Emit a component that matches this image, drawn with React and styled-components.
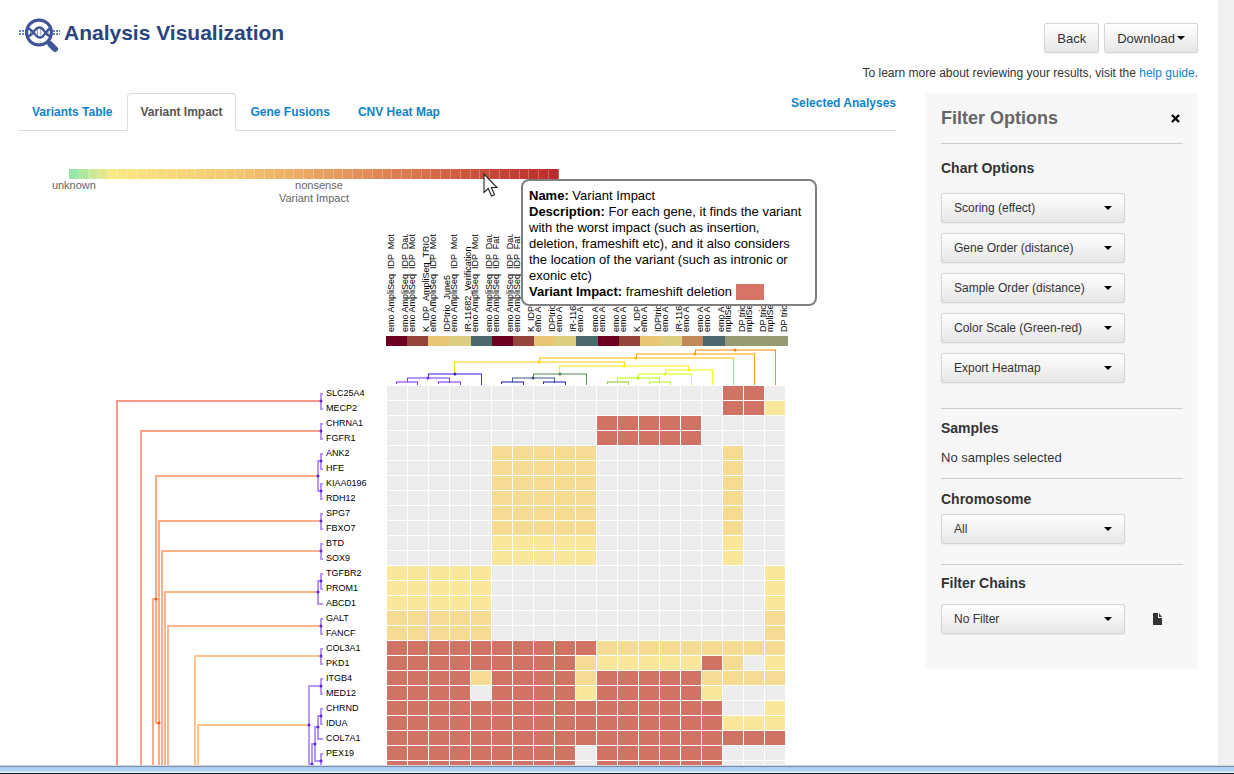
import React, { useState } from "react";
import styled, { createGlobalStyle } from "styled-components";

const GENES = [
  ["SLC25A4", "................rr."],
  ["MECP2", "................rry"],
  ["CHRNA1", "..........rrrrr...."],
  ["FGFR1", "..........rrrrr...."],
  ["ANK2", ".....ooooo......o.."],
  ["HFE", ".....ooooo......o.."],
  ["KIAA0196", ".....ooooo......o.."],
  ["RDH12", ".....ooooo......o.."],
  ["SPG7", ".....ooooo......o.."],
  ["FBXO7", ".....ooooo......o.."],
  ["BTD", ".....yyyyy......y.."],
  ["SOX9", ".....yyyyy......y.."],
  ["TGFBR2", "yyyyy.............y"],
  ["PROM1", "yyyyy.............y"],
  ["ABCD1", "yyyyy.............y"],
  ["GALT", "ooooo.............o"],
  ["FANCF", "ooooo.............o"],
  ["COL3A1", "rrrrrrrrrrooooooooo"],
  ["PKD1", "rrrrrrrrroyyyyyro.y"],
  ["ITGB4", "rrrrorrrrorrrrroooo"],
  ["MED12", "rrrr.rrrryrrrrry..."],
  ["CHRND", "rrrrrrrrrrrrrrrr..y"],
  ["IDUA", "rrrrrrrrrrrrrrrryyy"],
  ["COL7A1", "rrrrrrrrrrrrrrrrrrr"],
  ["PEX19", "rrrrrrrrr.rrrrrr..."],
  ["", "rrrrrrrrr.rrrrrr..."],
];

const CELL_COLORS = { r: "#d07264", o: "#f5db94", y: "#fae79b", ".": "#ededed" };

const BAND = [
  "#6b0020", "#95443c", "#e8c878", "#dccf80", "#4e676c",
  "#6b0020", "#95443c", "#e8c878", "#dccf80", "#4e676c",
  "#6b0020", "#95443c", "#e8c878", "#dccf80", "#c18858",
  "#4e676c", "#969a73", "#969a73", "#969a73",
];

const MOT = "emo AmpliSeq  IDP  Mot";
const DAU = "emo AmpliSeq  IDP  Dau";
const FAT = "emo AmpliSeq  IDP  Fat";
const TRIO = "K_IDP_AmpliSeq_TRIO";
const JUNE = "IDPtrio_June5";
const IR = "IR-11682_Verification";

// [baseline x, label]
const SAMPLES = [
  [8, MOT], [22, DAU], [29, MOT], [43, TRIO], [50, MOT], [64, JUNE], [71, MOT],
  [85, IR], [92, MOT], [106, DAU], [113, FAT], [127, DAU], [134, FAT],
  [148, TRIO], [155, FAT], [169, JUNE], [176, FAT], [190, IR], [197, FAT],
  [212, DAU], [219, FAT], [233, DAU], [240, MOT], [254, TRIO], [261, MOT],
  [275, JUNE], [282, MOT], [296, IR], [303, MOT], [317, DAU], [324, MOT],
  [338, DAU], [345, "mpliSeq IDP"], [359, "DP trio"], [366, "mpliSeq IDP"],
  [380, "DP trio"], [387, "mpliSeq IDP"], [401, "DP trio"],
];

// [y, x1, bottom of left arm, x2, bottom of right arm, colour]
const COLUMN_TREE = [
  [4, 309, 8, 389, 38, "#ff7f00"],
  [8, 250, 12, 368, 38, "#ff9f00"],
  [12, 153, 16, 347, 38, "#ffbc00"],
  [16, 68, 28, 238, 20, "#ffd000"],
  [20, 173, 28, 302, 24, "#ffee00"],
  [24, 279, 28, 326, 38, "#f0ff00"],
  [28, 252, 32, 305, 38, "#d8ff00"],
  [32, 231, 36, 273, 36, "#b4ff00"],
  [36, 221, 38, 242, 38, "#84cc20"],
  [36, 263, 38, 284, 38, "#b0f400"],
  [28, 42, 32, 95, 38, "#4018d8"],
  [32, 21, 36, 63, 36, "#7030f0"],
  [36, 10, 38, 31, 38, "#8020ff"],
  [36, 52, 38, 74, 38, "#8020ff"],
  [28, 147, 32, 200, 38, "#4f8a50"],
  [32, 126, 36, 168, 36, "#365a86"],
  [36, 115, 38, 137, 38, "#1414b8"],
  [36, 157, 38, 179, 38, "#1414b8"],
];

// [x, y1, end of upper arm, y2, end of lower arm, colour]
const V = "#6a30ee";
const ROW_TREE = [
  [302, 8, 304, 23, 304, V],
  [302, 38, 304, 53, 304, V],
  [302, 68, 304, 83, 304, V],
  [302, 98, 304, 113, 304, V],
  [299, 75, 302, 105, 302, V],
  [302, 128, 304, 143, 304, V],
  [302, 158, 304, 173, 304, V],
  [302, 188, 304, 203, 304, V],
  [299, 195, 302, 218, 304, V],
  [302, 233, 304, 248, 304, V],
  [302, 263, 304, 278, 304, V],
  [302, 293, 304, 308, 304, V],
  [302, 323, 304, 338, 304, V],
  [299, 330, 302, 353, 304, V],
  [302, 368, 304, 383, 304, V],
  [296, 341, 299, 375, 302, V],
  [293, 358, 296, 390, 296, V],
  [290, 300, 302, 378, 293, V],
  [98, 15, 302, 420, 98, "#ff2d08"],
  [122, 45, 302, 420, 122, "#ff4412"],
  [137, 90, 299, 337, 140, "#ff5510"],
  [134, 213, 137, 420, 134, "#ff5510"],
  [140, 135, 302, 420, 140, "#ff5a14"],
  [143, 165, 302, 420, 143, "#ff6014"],
  [146, 206, 299, 420, 146, "#ff6414"],
  [149, 240, 302, 420, 149, "#ff6a18"],
  [176, 270, 302, 420, 176, "#ff8a18"],
  [179, 339, 290, 420, 179, "#ff9020"],
];

const ROW_NODES = [
  [302, 15], [302, 45], [302, 75], [302, 105], [299, 90], [302, 135], [302, 165],
  [302, 195], [299, 206], [302, 240], [302, 270], [302, 300], [302, 330],
  [299, 341], [296, 358], [293, 378], [290, 339], [302, 375],
];

const STOPS = [
  [0, [152, 230, 168]],
  [4, [251, 233, 131]],
  [16, [243, 201, 114]],
  [27, [229, 155, 95]],
  [36, [214, 112, 75]],
  [42, [200, 76, 58]],
  [49, [186, 43, 43]],
];

const scaleColor = (i) => {
  const next = STOPS.findIndex(([at]) => at > i);
  if (next === -1) return `rgb(${STOPS[STOPS.length - 1][1].join(",")})`;
  const [a, from] = STOPS[next - 1];
  const [b, to] = STOPS[next];
  const t = (i - a) / (b - a);
  return `rgb(${from.map((c, k) => Math.round(c + (to[k] - c) * t)).join(",")})`;
};

const Logo = () => (
  <svg width="42" height="36" viewBox="0 0 42 36" fill="none" stroke="#3f5598" aria-hidden="true">
    <path d="M0 14h7M0 17h7M34 14h7M34 17h7" strokeDasharray="2 1" strokeWidth="1.5" />
    <circle cx="20" cy="15.500" r="12.400" strokeWidth="3.200" />
    <path d="M29 24.500l2.500 2.500" strokeWidth="4" />
    <path d="M31.500 27.500L36 32" strokeWidth="6" strokeLinecap="round" />
    <path d="M8 11.500c3.500 0 5 2 7 4.500s3 4.500 6 4.500 4-2.500 5.500-4.500 2.500-4.500 6-4.500" strokeWidth="2.300" />
    <path d="M8 19.500c3.500 0 5-2.500 6.500-4.500s3-4.500 6-4.500 4 2.500 5.500 4.500 3 4.500 6.500 4.500" strokeWidth="2.300" />
    <path d="M11.500 13v5M18.500 12v6.500M21.800 12v6.500M29 13.500v4" strokeWidth="1" opacity="0.6" />
  </svg>
);

const Caret = () => (
  <StCaret width="8" height="4" viewBox="0 0 8 4" aria-hidden="true">
    <path d="M0 0h8L4 4z" />
  </StCaret>
);

const Select = ({ label, options }) => {
  const [value, setValue] = useState(options[0]);
  return (
    <StSelectBox>
      <StSelect aria-label={label} value={value} onChange={(e) => setValue(e.target.value)}>
        {options.map((o) => (
          <option key={o}>{o}</option>
        ))}
      </StSelect>
      <Caret />
    </StSelectBox>
  );
};

const Legend = () => (
  <StLegend>
    <StScale>
      {Array.from({ length: 50 }, (_, i) => (
        <StScaleStep key={i} style={{ backgroundColor: scaleColor(i) }} />
      ))}
    </StScale>
    <StScaleLabels>
      <StScaleLabel $at={1}>unknown</StScaleLabel>
      <StScaleLabel $at={26}>nonsense</StScaleLabel>
    </StScaleLabels>
    <StScaleTitle>Variant Impact</StScaleTitle>
    <StPointer width="15" height="25" viewBox="0 0 15 25" aria-hidden="true">
      <path
        d="M1 1v18.500l4.300-4 3.200 7.500 3-1.300-3.200-7.200h5.700z"
        fill="#fff"
        stroke="#222"
        strokeWidth="1.100"
      />
    </StPointer>
    <StTooltip role="tooltip">
      <div><b>Name:</b> Variant Impact</div>
      <div>
        <b>Description:</b> For each gene, it finds the variant with the worst impact (such as
        insertion, deletion, frameshift etc), and it also considers the location of the variant
        (such as intronic or exonic etc)
      </div>
      <StTooltipValue>
        <span><b>Variant Impact:</b> frameshift deletion</span>
        <StSwatch />
      </StTooltipValue>
    </StTooltip>
  </StLegend>
);

const Heatmap = () => (
  <StChart>
    <StSampleLabels width="404" height="102">
      {SAMPLES.map(([x, name]) => (
        <text key={x} transform={`translate(${x} 98) rotate(-90)`}>
          {name}
        </text>
      ))}
    </StSampleLabels>
    <StBand>
      {BAND.map((c, i) => (
        <StBandStep key={i} $color={c} />
      ))}
    </StBand>
    <StColumnTree width="402" height="40">
      {COLUMN_TREE.map(([y, x1, b1, x2, b2, c], i) => (
        <g key={i} stroke={c} fill="none">
          <path d={`M${x1} ${y}H${x2 + 1}`} strokeWidth="2" opacity="0.5" />
          <path d={`M${x1 + 0.5} ${y}V${b1}M${x2 + 0.5} ${y}V${b2 + 1}`} opacity="0.9" />
          {b2 - y > 2 && (
            <circle cx={Math.round((x1 + x2) / 2)} cy={y} r="1.500" fill={c} stroke="none" />
          )}
        </g>
      ))}
    </StColumnTree>
    <StRowTree width="307" height="400">
      {ROW_TREE.map(([x, y1, a1, y2, a2, c], i) => (
        <path key={i} d={`M${a1} ${y1}H${x}V${y2}H${a2}`} stroke={c} fill="none" strokeWidth="2" opacity="0.5" />
      ))}
      {ROW_NODES.map(([x, y]) => (
        <circle key={`${x}-${y}`} cx={x} cy={y} r="1.500" fill="#5a28d8" />
      ))}
      <circle cx="137" cy="213" r="1.500" fill="#ff5510" />
      <circle cx="140" cy="337" r="1.500" fill="#ff5510" />
    </StRowTree>
    <StGeneNames>
      {GENES.map(([name], i) => (
        <StGeneName key={i}>{name}</StGeneName>
      ))}
    </StGeneNames>
    <StCells>
      {GENES.map(([, row], i) =>
        row.split("").map((v, k) => <StCell key={`${i}-${k}`} $color={CELL_COLORS[v]} />)
      )}
    </StCells>
  </StChart>
);

const FilterPanel = () => (
  <StPanel>
    <StPanelHeader>
      <StPanelTitle>Filter Options</StPanelTitle>
      <StClose aria-label="Close">
        <svg width="9" height="9" viewBox="0 0 9 9" stroke="#000" strokeWidth="2.300">
          <path d="M1 1l7 7M8 1l-7 7" />
        </svg>
      </StClose>
    </StPanelHeader>
    <StSection $height={265}>
      <StSectionTitle $top={14} $bottom={15}>Chart Options</StSectionTitle>
      <StOptionList>
        <Select label="Scoring" options={["Scoring (effect)"]} />
        <Select label="Gene Order" options={["Gene Order (distance)"]} />
        <Select label="Sample Order" options={["Sample Order (distance)"]} />
        <Select label="Color Scale" options={["Color Scale (Green-red)"]} />
        <StMenuButton>
          Export Heatmap
          <Caret />
        </StMenuButton>
      </StOptionList>
    </StSection>
    <StSection $height={70}>
      <StSectionTitle $top={9} $bottom={10}>Samples</StSectionTitle>
      <StEmpty>No samples selected</StEmpty>
    </StSection>
    <StSection $height={86}>
      <StSectionTitle $top={10} $bottom={5}>Chromosome</StSectionTitle>
      <Select label="Chromosome" options={["All"]} />
    </StSection>
    <StSection $height={105}>
      <StSectionTitle $top={8} $bottom={11}>Filter Chains</StSectionTitle>
      <StFilterRow>
        <Select label="Filter Chains" options={["No Filter"]} />
        <StIconButton aria-label="New filter">
          <svg width="9" height="12" viewBox="0 0 9 12" fill="#333">
            <path d="M0 0h5v5h4v7H0z" />
            <path d="M6 0l3 4H6z" />
          </svg>
        </StIconButton>
      </StFilterRow>
    </StSection>
  </StPanel>
);

const App = () => (
  <StWindow>
    <GlobalStyle />
    <StViewport>
      <StPage>
        <StHeader>
          <StBrand>
            <Logo />
            <StTitle>Analysis Visualization</StTitle>
          </StBrand>
          <StActions>
            <StButtons>
              <StButton>Back</StButton>
              <StButton>
                Download
                <Caret />
              </StButton>
            </StButtons>
            <StHelp>
              To learn more about reviewing your results, visit the <StLink href="#help">help guide</StLink>.
            </StHelp>
          </StActions>
        </StHeader>
        <StBody>
          <StMain>
            <StTabBar>
              <StTab href="#table">Variants Table</StTab>
              <StTab href="#impact" $active aria-current="page">Variant Impact</StTab>
              <StTab href="#fusions">Gene Fusions</StTab>
              <StTab href="#cnv">CNV Heat Map</StTab>
              <StSelected href="#selected">Selected Analyses</StSelected>
            </StTabBar>
            <Legend />
            <Heatmap />
          </StMain>
          <FilterPanel />
        </StBody>
      </StPage>
      <StScrollTrack />
    </StViewport>
    <StTaskbar />
  </StWindow>
);

export default App;

const GlobalStyle = createGlobalStyle`
  *, *::before, *::after {
    box-sizing: border-box;
  }
  body {
    margin: 0;
    background-color: #ffffff;
    color: #333333;
    font-family: "Liberation Sans", Arial, sans-serif;
    font-size: 13px;
    line-height: 20px;
  }
  svg {
    display: block;
    flex: none;
  }
`;

const StWindow = styled.div`
  display: flex;
  flex-direction: column;
  height: 100vh;
  overflow: hidden;
`;

const StViewport = styled.div`
  display: flex;
  flex: 1;
  min-height: 0;
`;

const StPage = styled.div`
  flex: 1;
  min-width: 0;
  overflow: hidden;
  padding: 17px 20px 0 19px;
`;

const StScrollTrack = styled.div`
  width: 16px;
  background-color: #f0f0f0;
`;

const StTaskbar = styled.div`
  flex: none;
  height: 9px;
  border-top: 1px solid #d4d9de;
  border-bottom: 1px solid #17202c;
  background: linear-gradient(#7d90aa 0 1px, #a8c9ec 1px, #b9d8f7 5px, #e4eef8 6px);
`;

const StHeader = styled.header`
  display: flex;
  justify-content: space-between;
  height: 76px;
`;

const StBrand = styled.div`
  display: flex;
  gap: 3px;
`;

const StTitle = styled.h1`
  margin: 0;
  color: #29447e;
  font-size: 21px;
  line-height: 32px;
`;

const StActions = styled.div`
  display: flex;
  flex-direction: column;
  align-items: flex-end;
  gap: 10px;
  padding-top: 6px;
`;

const StButtons = styled.div`
  display: flex;
  gap: 5px;
`;

const StButton = styled.button`
  display: flex;
  justify-content: space-between;
  align-items: center;
  gap: 2px;
  height: 30px;
  padding: 0 12px;
  border: 1px solid #d5d5d5;
  border-radius: 2px;
  background: linear-gradient(#ffffff, #e6e6e6);
  box-shadow: 0 1px 2px rgba(0, 0, 0, 0.06);
  color: #333333;
  font-family: inherit;
  font-size: 13px;
  cursor: pointer;
`;

const StCaret = styled.svg`
  fill: #000000;
`;

const StMenuButton = styled(StButton)`
  width: 100%;
  font-size: 12px;
`;

const StHelp = styled.div`
  font-size: 12px;
`;

const StLink = styled.a`
  color: #0f83c9;
  text-decoration: none;
`;

const StBody = styled.div`
  display: flex;
  align-items: flex-start;
  gap: 30px;
`;

const StMain = styled.main`
  flex: 1;
  min-width: 0;
`;

const StTabBar = styled.nav`
  display: flex;
  gap: 2px;
  height: 38px;
  border-bottom: 1px solid #dddddd;
  font-size: 12px;
  font-weight: 700;
`;

const StTab = styled.a`
  height: 38px;
  padding: 8px 12px;
  border: 1px solid ${(props) => (props.$active ? "#dddddd" : "transparent")};
  border-bottom-color: ${(props) => (props.$active ? "#ffffff" : "transparent")};
  border-radius: 4px 4px 0 0;
  color: ${(props) => (props.$active ? "#555555" : "#0f83c9")};
  text-decoration: none;
  white-space: nowrap;
`;

const StSelected = styled(StLink)`
  margin-left: auto;
`;

const StLegend = styled.div`
  position: relative;
  width: 490px;
  margin: 38px 0 29px 50px;
  color: #666666;
  font-size: 11px;
  line-height: 13px;
`;

const StScale = styled.div`
  display: flex;
  height: 10px;
`;

const StScaleStep = styled.div`
  flex: 1;
  border-right: 1px solid rgba(255, 255, 255, 0.25);
`;

const StScaleLabels = styled.div`
  display: grid;
  grid-template-columns: repeat(50, minmax(0, 1fr));
`;

const StScaleLabel = styled.span`
  grid-column: ${(props) => props.$at};
  grid-row: 1;
  justify-self: center;
`;

const StScaleTitle = styled.div`
  text-align: center;
`;

const StPointer = styled.svg`
  position: absolute;
  top: 4px;
  left: 414px;
  z-index: 2;
`;

const StTooltip = styled.div`
  position: absolute;
  top: 10px;
  left: 452px;
  z-index: 1;
  width: 296px;
  padding: 7px 6px 4px;
  border: 2px solid #808080;
  border-radius: 8px;
  background-color: #ffffff;
  color: #000000;
  font-size: 13px;
  line-height: 16px;
`;

const StTooltipValue = styled.div`
  display: flex;
  align-items: center;
  gap: 4px;
`;

const StSwatch = styled.span`
  width: 28px;
  height: 16px;
  background-color: #d77569;
`;

const StChart = styled.div`
  display: grid;
  grid-template-columns: 307px 60px 402px;
`;

const StSampleLabels = styled.svg`
  grid-column: 3;
  font-size: 9px;

  text {
    white-space: pre;
  }
`;

const StBand = styled.div`
  display: flex;
  grid-column: 3;
  height: 10px;
`;

const StBandStep = styled.div`
  flex: 1;
  background-color: ${(props) => props.$color};
`;

const StColumnTree = styled.svg`
  grid-column: 3;
`;

const StRowTree = styled.svg`
  grid-column: 1;
`;

const StGeneNames = styled.ul`
  margin: 0;
  padding: 0;
  list-style: none;
`;

const StGeneName = styled.li`
  height: 15px;
  color: #000000;
  font-size: 9px;
  line-height: 15px;
`;

const StCells = styled.div`
  display: grid;
  grid-template-columns: repeat(19, 20px);
  grid-auto-rows: 14px;
  gap: 1px;
  padding-left: 1px;
`;

const StCell = styled.div`
  background-color: ${(props) => props.$color};
`;

const StPanel = styled.aside`
  flex: none;
  width: 272px;
  padding: 0 15px;
  background-color: #f7f7f7;
`;

const StPanelHeader = styled.div`
  display: flex;
  justify-content: space-between;
  align-items: center;
  height: 50px;
`;

const StPanelTitle = styled.h2`
  margin: 0;
  color: #666666;
  font-size: 18px;
`;

const StClose = styled.button`
  padding: 3px;
  border: none;
  background: none;
  cursor: pointer;
`;

const StSection = styled.section`
  min-height: ${(props) => props.$height}px;
  border-top: 1px solid #cccccc;
`;

const StSectionTitle = styled.h3`
  margin: 0;
  padding: ${(props) => `${props.$top}px 0 ${props.$bottom}px`};
  font-size: 14px;
  line-height: 20px;
`;

const StOptionList = styled.div`
  display: flex;
  flex-direction: column;
  gap: 10px;
  width: 184px;
`;

const StSelectBox = styled.div`
  display: grid;
  grid-template-columns: 1fr 21px;
  align-items: center;
  width: 184px;

  ${StCaret} {
    grid-area: 1 / 2;
    pointer-events: none;
  }
`;

const StSelect = styled.select`
  grid-area: 1 / 1 / 2 / 3;
  height: 30px;
  padding: 0 12px;
  border: 1px solid #d5d5d5;
  border-radius: 2px;
  appearance: none;
  background: linear-gradient(#ffffff, #e6e6e6);
  box-shadow: 0 1px 2px rgba(0, 0, 0, 0.06);
  color: #333333;
  font-family: inherit;
  font-size: 12px;
  cursor: pointer;
`;

const StEmpty = styled.p`
  margin: 0;
  font-size: 13px;
`;

const StFilterRow = styled.div`
  display: flex;
  align-items: center;
  gap: 24px;
`;

const StIconButton = styled.button`
  padding: 4px;
  border: none;
  background: none;
  cursor: pointer;
`;
